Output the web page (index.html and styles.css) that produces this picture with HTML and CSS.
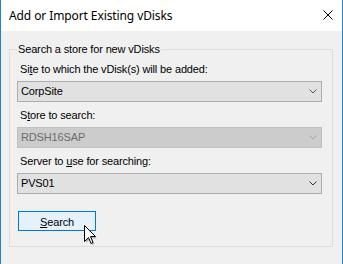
FILE: index.html
```html
<!DOCTYPE html>
<html>
<head>
<meta charset="utf-8">
<link rel="stylesheet" href="styles.css">
</head>
<body>
<div class="window">
  <div class="titlebar">
    <span class="title">Add or Import Existing vDisks</span>
    <svg class="close" width="10" height="10" viewBox="0 0 10 10"><path d="M0.5 0.5 L9.5 9.5 M9.5 0.5 L0.5 9.5" stroke="#000" stroke-width="1" fill="none"/></svg>
  </div>
  <div class="content">
    <fieldset class="group">
      <legend class="legend">Search a store for new vDisks</legend>
      <div class="field">
        <div class="label">Si<u>t</u>e to which the vDisk(s) will be added:</div>
        <div class="combo"><span>CorpSite</span><svg class="chev" width="8" height="5" viewBox="0 0 8 5"><path d="M0.5 0.5 L4 4 L7.5 0.5" stroke="#555" fill="none"/></svg></div>
      </div>
      <div class="field">
        <div class="label">S<u>t</u>ore to search:</div>
        <div class="combo disabled"><span>RDSH16SAP</span><svg class="chev" width="8" height="5" viewBox="0 0 8 5"><path d="M0.5 0.5 L4 4 L7.5 0.5" stroke="#a6a6a6" fill="none"/></svg></div>
      </div>
      <div class="field">
        <div class="label">Server to <u>u</u>se for searching:</div>
        <div class="combo"><span>PVS01</span><svg class="chev" width="8" height="5" viewBox="0 0 8 5"><path d="M0.5 0.5 L4 4 L7.5 0.5" stroke="#333" fill="none"/></svg></div>
      </div>
      <div class="actions">
        <div class="button"><u>S</u>earch</div>
        <svg class="cursor" width="14" height="21" viewBox="0 0 14 21">
          <path d="M2 2 L2 18 L5.5 14.5 L8 20 L10.5 19 L8 13.5 L13 13.5 Z" fill="rgba(0,0,0,0.25)"/>
          <path d="M0.5 0.5 L0.5 16.5 L4.5 12.5 L7 18.5 L9 17.5 L6.5 11.5 L11.5 11.5 Z" fill="#fff" stroke="#000" stroke-width="1" stroke-linejoin="miter"/>
        </svg>
      </div>
    </fieldset>
  </div>
</div>
</body>
</html>
```

FILE: styles.css
```css
html, body {
  margin: 0;
  padding: 0;
}
body {
  font-family: "Liberation Sans", Arial, sans-serif;
  font-size: 11px;
  letter-spacing: -0.15px;
  color: #000;
}
.window {
  width: 343px;
  height: 264px;
  box-sizing: border-box;
  border-left: 1px solid #1883d7;
  border-right: 1px solid #1883d7;
  background: #f0f0f0;
  display: flex;
  flex-direction: column;
}
.titlebar {
  height: 31px;
  background: #fff;
  display: flex;
  align-items: center;
  justify-content: space-between;
  padding: 0 9px 0 8px;
}
.title {
  font-family: "Noto Sans", "Open Sans", sans-serif;
  font-size: 12px;
  letter-spacing: -0.1px;
  line-height: 16px;
  margin-top: 1px;
}
.close {
  display: block;
  margin-bottom: 1px;
}
.content {
  padding: 10px 9px 0 8px;
}
.group {
  margin: 0;
  border: 1px solid #dcdcdc;
  padding: 4px 10px 15px 7px;
  min-width: 0;
}
.legend {
  padding: 0 1px;
  line-height: 16px;
}
.field {
  display: flex;
  flex-direction: column;
  gap: 4px;
  margin-bottom: 5px;
}
.label {
  padding-left: 3px;
  line-height: 16px;
}
.combo {
  height: 21px;
  box-sizing: border-box;
  border: 1px solid #adadad;
  background: #e1e1e1;
  display: flex;
  align-items: center;
  justify-content: space-between;
  padding: 0 4px 0 3px;
  line-height: 19px;
}
.combo.disabled {
  background: #cccccc;
  border-color: #bfbfbf;
  color: #6d6d6d;
}
.chev {
  display: block;
  margin-bottom: 1px;
}
.actions {
  position: relative;
  padding: 12px 0 0 1px;
}
.button {
  width: 78px;
  height: 20px;
  box-sizing: border-box;
  border: 1px solid #0078d7;
  background: #e5f1fb;
  text-align: center;
  line-height: 18px;
  padding-top: 1px;
}
.cursor {
  position: absolute;
  left: 67px;
  top: 26px;
}
```
